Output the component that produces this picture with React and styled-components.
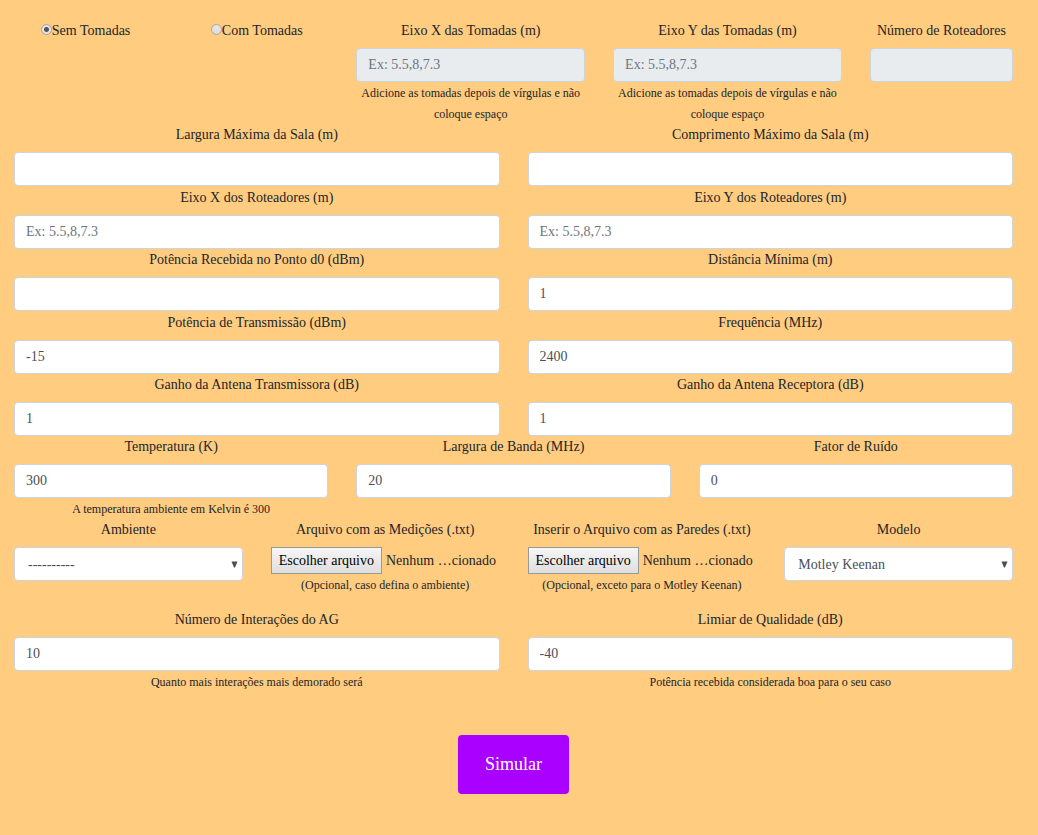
import React, { useRef } from "react";
import styled, { createGlobalStyle } from "styled-components";

const GlobalStyle = createGlobalStyle`
  *, *::before, *::after { box-sizing: border-box; }
  html { background: #ffcc80; }
  body {
    margin: 0;
    color: #212529;
    font-family: "Liberation Serif", "Times New Roman", serif;
    font-size: 14px;
    line-height: 21px;
  }
  input, select, button { font-family: inherit; }
`;

const Page = styled.main`
  padding: 20px 11px 40px 0;
`;

const Form = styled.form`
  display: flex;
  flex-direction: column;
  gap: 1px;
`;

const Section = styled.section`
  display: flex;
  flex-direction: column;
`;

const Row = styled.div`
  display: grid;
  grid-template-columns: repeat(12, minmax(0, 1fr));
  padding-bottom: ${(p) => (p.$spaced ? "13px" : "0")};
`;

const Col = styled.div`
  grid-column: span ${(p) => p.$span};
  display: flex;
  flex-direction: column;
  padding: 0 14px;
  text-align: center;
`;

const Label = styled.label`
  padding-bottom: 7px;
  line-height: 21px;
  white-space: nowrap;
`;

const Control = styled.input`
  width: 100%;
  height: 34px;
  padding: 0 11px;
  border: 1px solid #ced4da;
  border-radius: 4px;
  background: #fff;
  color: #495057;
  font-size: 14px;
  &::placeholder { color: #6c757d; opacity: 1; }
  &:disabled { background: #e9ecef; }
`;

const Hint = styled.small`
  margin-bottom: -1px;
  padding-top: 1px;
  font-size: 12px;
  line-height: 21px;
`;

const RadioLabel = styled.label`
  display: flex;
  justify-content: center;
`;

const Radio = styled.input`
  appearance: none;
  width: 11px;
  height: 11px;
  margin: 4px 0 0;
  border: 1px solid #a6a6a6;
  border-radius: 50%;
  background: linear-gradient(#e8e8e8, #dcdcdc);
  &:checked {
    background: radial-gradient(circle, #555 0 2px, #e4e4e4 3px);
  }
`;

const SelectBox = styled.div`
  display: grid;
  align-items: center;
  > * { grid-area: 1 / 1; }
`;

const Select = styled(Control)`
  appearance: none;
  padding: 0 13px;
`;

const Arrow = styled.svg`
  justify-self: end;
  margin-right: 5px;
  pointer-events: none;
`;

const FileBox = styled.div`
  position: relative;
  display: flex;
  align-items: center;
  gap: 4px;
  white-space: nowrap;
`;

const FileInput = styled.input`
  position: absolute;
  width: 1px;
  height: 1px;
  opacity: 0;
`;

const FileButton = styled.button`
  flex: none;
  height: 27px;
  padding: 0 7px;
  border: 1px solid #999;
  border-radius: 0;
  background: linear-gradient(#f6f6f6, #dedede);
  color: #000;
  font-size: 14px;
`;

const Actions = styled.div`
  display: flex;
  justify-content: center;
  padding-top: 42px;
`;

const Submit = styled.button`
  height: 59px;
  padding: 0 27px;
  border: 0;
  border-radius: 4px;
  background: #aa00ff;
  color: #fff;
  font-size: 18px;
`;

function Field({ id, span = 6, label, hint, ...rest }) {
  return (
    <Col $span={span}>
      <Label htmlFor={id}>{label}</Label>
      <Control id={id} name={id} type="text" {...rest} />
      {hint && <Hint>{hint}</Hint>}
    </Col>
  );
}

function RadioField({ label, ...rest }) {
  return (
    <Col $span={2}>
      <RadioLabel>
        <Radio type="radio" name="tomadas" {...rest} />
        {label}
      </RadioLabel>
    </Col>
  );
}

function SelectField({ id, label, options }) {
  return (
    <Col $span={3}>
      <Label htmlFor={id}>{label}</Label>
      <SelectBox>
        <Select as="select" id={id} name={id}>
          {options.map((o) => (
            <option key={o}>{o}</option>
          ))}
        </Select>
        <Arrow width="7" height="7" viewBox="0 0 7 7" aria-hidden="true">
          <path d="M0.5 0.5H6.5L4 6.5H3Z" fill="#495057" />
        </Arrow>
      </SelectBox>
    </Col>
  );
}

function FileField({ id, label, hint }) {
  const ref = useRef(null);
  return (
    <Col $span={3}>
      <Label htmlFor={id}>{label}</Label>
      <FileBox>
        <FileInput ref={ref} id={id} name={id} type="file" accept=".txt" tabIndex={-1} />
        <FileButton type="button" onClick={() => ref.current.click()}>
          Escolher arquivo
        </FileButton>
        <span>Nenhum …cionado</span>
      </FileBox>
      <Hint>{hint}</Hint>
    </Col>
  );
}

const example = "Ex: 5.5,8,7.3";
const outletHint = "Adicione as tomadas depois de vírgulas e não coloque espaço";

export default function App() {
  return (
    <Page>
      <GlobalStyle />
      <Form onSubmit={(e) => e.preventDefault()}>
        <Section>
          <Row>
            <RadioField label="Sem Tomadas" value="sem" defaultChecked />
            <RadioField label="Com Tomadas" value="com" />
            <Field id="tomadasX" span={3} label="Eixo X das Tomadas (m)" placeholder={example} hint={outletHint} disabled />
            <Field id="tomadasY" span={3} label="Eixo Y das Tomadas (m)" placeholder={example} hint={outletHint} disabled />
            <Field id="roteadores" span={2} label="Número de Roteadores" disabled />
          </Row>
          <Row>
            <Field id="largura" label="Largura Máxima da Sala (m)" />
            <Field id="comprimento" label="Comprimento Máximo da Sala (m)" />
          </Row>
        </Section>
        <Section>
          <Row>
            <Field id="roteadoresX" label="Eixo X dos Roteadores (m)" placeholder={example} />
            <Field id="roteadoresY" label="Eixo Y dos Roteadores (m)" placeholder={example} />
          </Row>
          <Row>
            <Field id="potenciaD0" label="Potência Recebida no Ponto d0 (dBm)" />
            <Field id="distancia" label="Distância Mínima (m)" defaultValue="1" />
          </Row>
        </Section>
        <Section>
          <Row>
            <Field id="potencia" label="Potência de Transmissão (dBm)" defaultValue="-15" />
            <Field id="frequencia" label="Frequência (MHz)" defaultValue="2400" />
          </Row>
          <Row>
            <Field id="ganhoTx" label="Ganho da Antena Transmissora (dB)" defaultValue="1" />
            <Field id="ganhoRx" label="Ganho da Antena Receptora (dB)" defaultValue="1" />
          </Row>
          <Row>
            <Field id="temperatura" span={4} label="Temperatura (K)" defaultValue="300" hint="A temperatura ambiente em Kelvin é 300" />
            <Field id="banda" span={4} label="Largura de Banda (MHz)" defaultValue="20" />
            <Field id="ruido" span={4} label="Fator de Ruído" defaultValue="0" />
          </Row>
          <Row $spaced>
            <SelectField id="ambiente" label="Ambiente" options={["----------"]} />
            <FileField id="medicoes" label="Arquivo com as Medições (.txt)" hint="(Opcional, caso defina o ambiente)" />
            <FileField id="paredes" label="Inserir o Arquivo com as Paredes (.txt)" hint="(Opcional, exceto para o Motley Keenan)" />
            <SelectField id="modelo" label="Modelo" options={["Motley Keenan"]} />
          </Row>
        </Section>
        <Section>
          <Row>
            <Field id="interacoes" label="Número de Interações do AG" defaultValue="10" hint="Quanto mais interações mais demorado será" />
            <Field id="limiar" label="Limiar de Qualidade (dB)" defaultValue="-40" hint="Potência recebida considerada boa para o seu caso" />
          </Row>
        </Section>
        <Actions>
          <Submit type="submit">Simular</Submit>
        </Actions>
      </Form>
    </Page>
  );
}
